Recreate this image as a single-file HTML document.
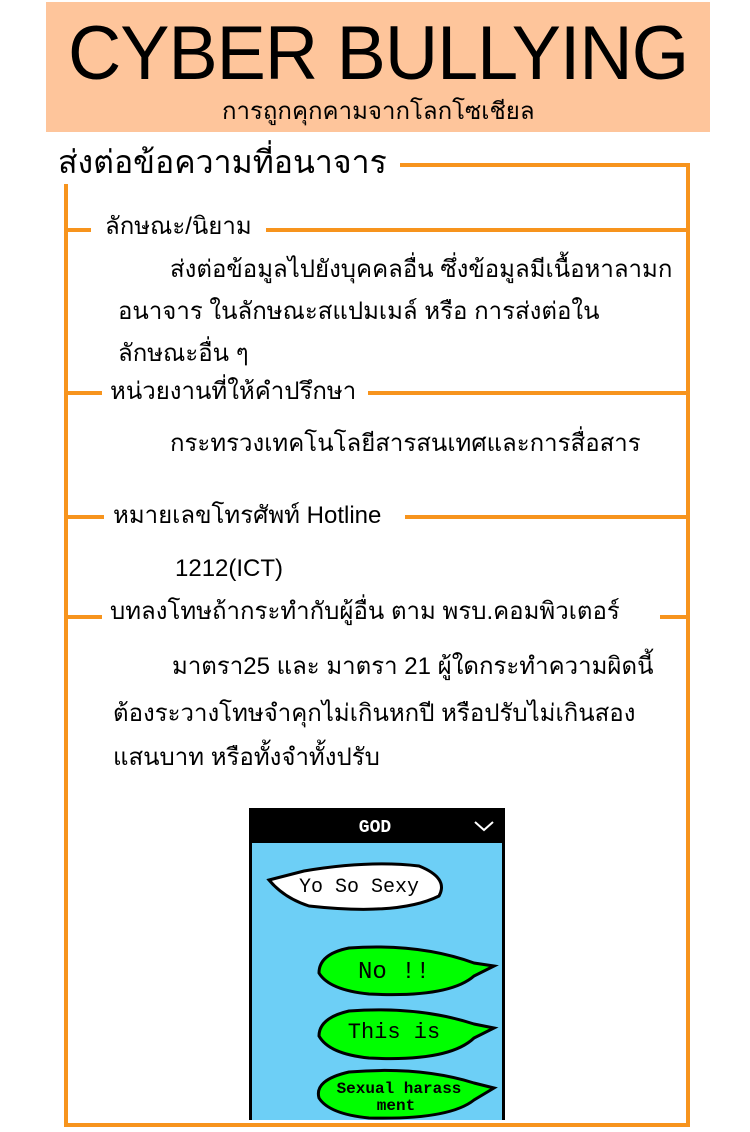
<!DOCTYPE html>
<html><head><meta charset="utf-8"><style>
*{margin:0;padding:0;box-sizing:border-box}
body{width:750px;height:1132px;background:#fff;position:relative;overflow:hidden;font-family:"Liberation Sans","Noto Sans CJK SC",sans-serif;color:#000}
.t{position:absolute;white-space:nowrap;line-height:1}
.o{position:absolute;background:#f7941d}
.hd{position:absolute;left:46px;top:2px;width:664px;height:130px;background:#fec59b}
</style></head><body>
<div class="hd"></div>
<div class="t" style="left:68px;top:16px;font-size:76px;letter-spacing:-1px;transform:scaleX(0.97);transform-origin:left">CYBER BULLYING</div>
<div class="t" style="left:222px;top:100px;font-size:24px">การถูกคุกคามจากโลกโซเชียล</div>

<div class="o" style="left:400px;top:163px;width:290px;height:4px"></div>
<div class="o" style="left:686px;top:163px;width:4px;height:964px"></div>
<div class="o" style="left:64px;top:184px;width:4px;height:943px"></div>
<div class="o" style="left:64px;top:1123px;width:626px;height:4px"></div>
<div class="o" style="left:64px;top:228px;width:27px;height:4px"></div>
<div class="o" style="left:266px;top:228px;width:422px;height:4px"></div>
<div class="o" style="left:64px;top:391px;width:38px;height:4px"></div>
<div class="o" style="left:368px;top:391px;width:320px;height:4px"></div>
<div class="o" style="left:64px;top:515px;width:40px;height:4px"></div>
<div class="o" style="left:405px;top:515px;width:283px;height:4px"></div>
<div class="o" style="left:64px;top:615px;width:38px;height:4px"></div>
<div class="o" style="left:660px;top:615px;width:28px;height:4px"></div>

<div class="t" style="left:58px;top:146px;font-size:32px">ส่งต่อข้อความที่อนาจาร</div>
<div class="t" style="left:105px;top:215px;font-size:24px">ลักษณะ/นิยาม</div>
<div class="t" style="left:170px;top:258px;font-size:24px">ส่งต่อข้อมูลไปยังบุคคลอื่น ซึ่งข้อมูลมีเนื้อหาลามก</div>
<div class="t" style="left:118px;top:300px;font-size:24px">อนาจาร ในลักษณะสแปมเมล์ หรือ การส่งต่อใน</div>
<div class="t" style="left:118px;top:342px;font-size:24px">ลักษณะอื่น ๆ</div>
<div class="t" style="left:110px;top:380px;font-size:24px">หน่วยงานที่ให้คำปรึกษา</div>
<div class="t" style="left:170px;top:432px;font-size:24px">กระทรวงเทคโนโลยีสารสนเทศและการสื่อสาร</div>
<div class="t" style="left:113px;top:504px;font-size:24px">หมายเลขโทรศัพท์ Hotline</div>
<div class="t" style="left:175px;top:557px;font-size:24px">1212(ICT)</div>
<div class="t" style="left:110px;top:600px;font-size:24px">บทลงโทษถ้ากระทำกับผู้อื่น ตาม พรบ.คอมพิวเตอร์</div>
<div class="t" style="left:172px;top:655px;font-size:24px">มาตรา25 และ มาตรา 21 ผู้ใดกระทำความผิดนี้</div>
<div class="t" style="left:113px;top:702px;font-size:24px">ต้องระวางโทษจำคุกไม่เกินหกปี หรือปรับไม่เกินสอง</div>
<div class="t" style="left:113px;top:746px;font-size:24px">แสนบาท หรือทั้งจำทั้งปรับ</div>

<svg style="position:absolute;left:249px;top:808px" width="256" height="312" viewBox="0 0 256 312">
<rect x="0" y="0" width="256" height="312" fill="#000"/>
<rect x="3" y="35" width="250" height="277" fill="#6dcff6"/>
<text x="126" y="24" font-family="Liberation Mono,monospace" font-weight="bold" font-size="18" fill="#fff" text-anchor="middle">GOD</text>
<path d="M226 14 L235 22 L244 14" stroke="#fff" stroke-width="2" fill="none"/>
<path d="M20 72 L55 63 Q120 52 170 58 Q200 70 190 88 Q150 108 60 98 Q35 90 20 72Z" fill="#fff" stroke="#000" stroke-width="3"/>
<text x="110" y="84" font-family="Liberation Mono,monospace" font-size="20" text-anchor="middle">Yo So Sexy</text>
<path d="M245 158 L225 155 Q170 135 100 140 Q70 146 70 165 Q80 182 120 186 Q200 190 225 168Z" fill="#00ff00" stroke="#000" stroke-width="3"/>
<text x="145" y="170" font-family="Liberation Mono,monospace" font-size="24" text-anchor="middle">No !!</text>
<path d="M245 220 L225 216 Q170 198 100 203 Q70 210 70 228 Q80 246 120 250 Q200 254 225 230Z" fill="#00ff00" stroke="#000" stroke-width="3"/>
<text x="145" y="230" font-family="Liberation Mono,monospace" font-size="22" text-anchor="middle">This is</text>
<path d="M245 280 L225 275 Q170 258 100 264 Q65 272 70 290 Q80 306 120 310 Q200 312 225 292Z" fill="#00ff00" stroke="#000" stroke-width="3"/>
<text x="150" y="285" font-family="Liberation Mono,monospace" font-weight="bold" font-size="16" text-anchor="middle">Sexual harass</text>
<text x="147" y="302" font-family="Liberation Mono,monospace" font-weight="bold" font-size="16" text-anchor="middle">ment</text>
</svg>
</body></html>
